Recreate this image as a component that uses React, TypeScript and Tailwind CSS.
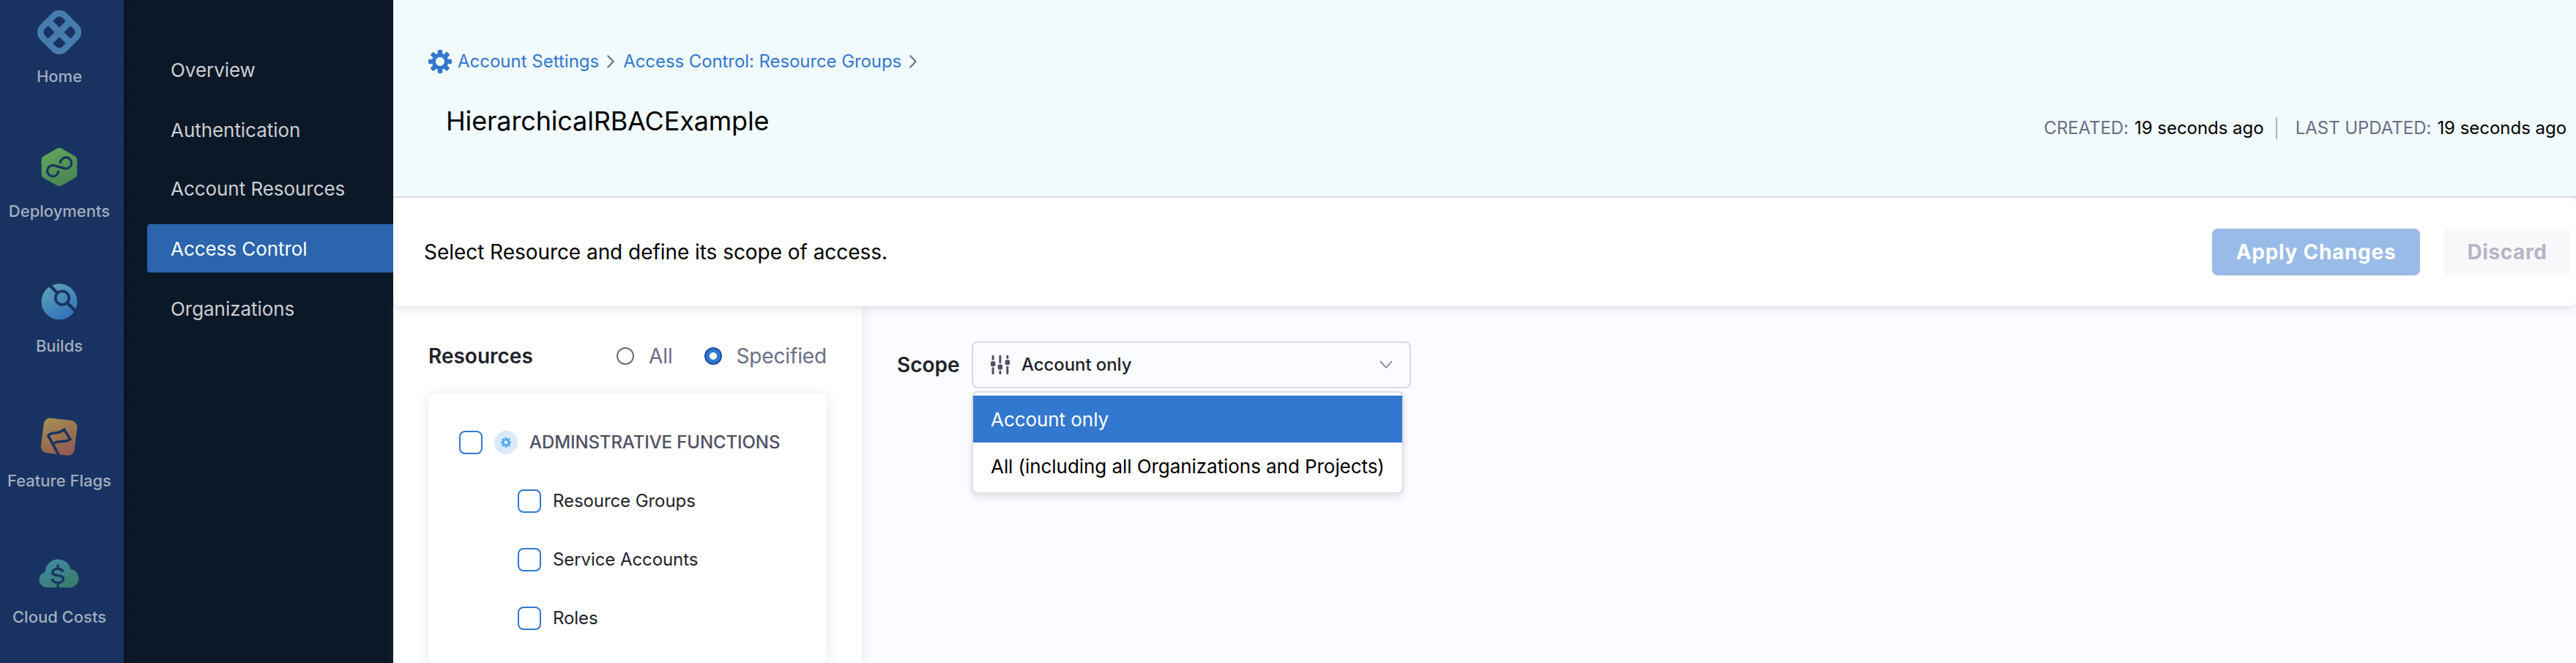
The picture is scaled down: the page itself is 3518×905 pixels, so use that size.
import type { ReactNode } from 'react'
import clsx from 'clsx'

const COG_PATH =
    'M15.19 6.39h-1.85c-.11-.37-.27-.71-.45-1.04l1.36-1.36c.31-.31.31-.82 0-1.13l-1.13-1.13c-.31-.31-.82-.31-1.13 0l-1.36 1.36c-.33-.17-.67-.33-1.04-.44V.79c0-.44-.36-.8-.8-.8h-1.6c-.44 0-.8.36-.8.8v1.86c-.39.12-.75.28-1.1.47l-1.3-1.3c-.3-.3-.79-.3-1.09 0L1.82 2.91c-.3.3-.3.79 0 1.09l1.3 1.3c-.2.34-.36.7-.48 1.09H.79c-.44 0-.8.36-.8.8v1.6c0 .44.36.8.8.8h1.85c.11.37.27.71.45 1.04l-1.36 1.36c-.31.31-.31.82 0 1.13l1.13 1.13c.31.31.82.31 1.13 0l1.36-1.36c.33.18.67.33 1.04.44v1.86c0 .44.36.8.8.8h1.6c.44 0 .8-.36.8-.8v-1.86c.39-.12.75-.28 1.1-.47l1.3 1.3c.3.3.79.3 1.09 0l1.09-1.09c.3-.3.3-.79 0-1.09l-1.3-1.3c.19-.35.36-.71.48-1.1h1.85c.44 0 .8-.36.8-.8v-1.6a.816.816 0 0 0-.81-.79zm-7.2 4.6c-1.66 0-3-1.34-3-3s1.34-3 3-3 3 1.34 3 3-1.34 3-3 3z'

function CogIcon({ className }: { className?: string }) {
    return (
        <svg viewBox="0 0 16 16" className={className} fill="currentColor">
            <path d={COG_PATH} />
        </svg>
    )
}

function HomeIcon() {
    return (
        <svg viewBox="0 0 60 60" className="h-[60px] w-[60px]" fill="none" stroke="#477dae">
            <rect x="8.75" y="8.75" width="42.5" height="42.5" rx="10.2" strokeWidth="8.5" transform="rotate(45 30 30)" />
            <path d="M16.5 16.5l27 27M43.5 16.5l-27 27" strokeWidth="9" />
        </svg>
    )
}

function DeploymentsIcon() {
    return (
        <svg viewBox="0 0 60 60" className="h-[60px] w-[60px]" fill="none">
            <defs>
                <linearGradient id="cd" x1="15" y1="5" x2="42" y2="55" gradientUnits="userSpaceOnUse">
                    <stop stopColor="#5fa65a" />
                    <stop offset="1" stopColor="#498355" />
                </linearGradient>
            </defs>
            <path
                d="M30 9.2L48.8 20V40L30 50.8L11.2 40V20Z"
                fill="url(#cd)"
                stroke="url(#cd)"
                strokeWidth="11"
                strokeLinejoin="round"
            />
            <path
                d="M31.5 25.2A7.6 7.6 0 1 1 37.3 31.9L22.7 27.9A7.5 7.5 0 1 0 28.6 35"
                stroke="#183361"
                strokeWidth="3.2"
            />
        </svg>
    )
}

function BuildsIcon() {
    return (
        <svg viewBox="0 0 60 60" className="h-[60px] w-[60px]" fill="none">
            <defs>
                <linearGradient id="ci" x1="16" y1="9" x2="40" y2="52" gradientUnits="userSpaceOnUse">
                    <stop stopColor="#5b9fb4" />
                    <stop offset="1" stopColor="#3172bd" />
                </linearGradient>
            </defs>
            <circle cx="30" cy="29.8" r="24.5" fill="url(#ci)" />
            <circle cx="34" cy="24.7" r="9.2" stroke="#183361" strokeWidth="3.7" />
            <path d="M15 5.6L27.6 18.2M40.8 31.4L56 46.6" stroke="#183361" strokeWidth="4.2" />
        </svg>
    )
}

function FeatureFlagsIcon() {
    return (
        <svg viewBox="0 0 60 60" className="h-[60px] w-[60px]" fill="none">
            <defs>
                <linearGradient id="ff" x1="12" y1="6" x2="42" y2="52" gradientUnits="userSpaceOnUse">
                    <stop stopColor="#a48f50" />
                    <stop offset="1" stopColor="#925b54" />
                </linearGradient>
            </defs>
            <rect x="6.7" y="6.2" width="46" height="48" rx="9" fill="url(#ff)" transform="rotate(7 29.7 30.2)" />
            <path
                d="M30.3 57L14.8 28.6C19.5 22.2 27.5 28 36.8 20.4L44.8 33.6C37 39.4 31 33.6 22.8 39.2"
                stroke="#183361"
                strokeWidth="3.6"
            />
        </svg>
    )
}

function CloudCostsIcon() {
    return (
        <svg viewBox="0 0 60 60" className="h-[60px] w-[60px]" fill="none">
            <defs>
                <linearGradient id="ce" x1="20" y1="12" x2="40" y2="52" gradientUnits="userSpaceOnUse">
                    <stop stopColor="#4189a1" />
                    <stop offset="1" stopColor="#397c6b" />
                </linearGradient>
            </defs>
            <path
                d="M12.7 50A10.8 10.8 0 0 1 10.7 28.7A17.7 17.7 0 0 1 45.6 25A12.6 12.6 0 0 1 45.6 50Z"
                fill="url(#ce)"
            />
            <path
                d="M28 18.6V24M28 43V51M35.2 28.6C34.2 25.8 31.4 24.4 28 24.4C23.6 24.4 20.8 26.4 20.8 29.4C20.8 36 35.6 31 35.6 38.4C35.6 41.6 32.4 43.4 28 43.4C23.8 43.4 21 41.4 20.2 38"
                stroke="#183361"
                strokeWidth="3.2"
            />
        </svg>
    )
}

function SlidersIcon() {
    return (
        <svg viewBox="0 0 26 26" className="h-[26px] w-[26px]" fill="#4f5162">
            <rect x="1.6" y="0" width="3" height="6.8" rx="1.2" />
            <rect x="0" y="8.2" width="6.3" height="6.8" rx="1.4" />
            <rect x="1.6" y="16.2" width="3" height="9.8" rx="1.2" />
            <rect x="11.4" y="0" width="3" height="11" rx="1.2" />
            <rect x="9.8" y="12.6" width="6.3" height="6.8" rx="1.4" />
            <rect x="11.4" y="20.8" width="3" height="5.2" rx="1.2" />
            <rect x="21.3" y="0" width="3" height="4.8" rx="1.2" />
            <rect x="19.7" y="6.2" width="6.3" height="6.8" rx="1.4" />
            <rect x="21.3" y="14.4" width="3" height="11.6" rx="1.2" />
        </svg>
    )
}

function Separator() {
    return (
        <svg viewBox="0 0 10 18" className="h-[18px] w-[10px]" fill="none" stroke="#6b6d85" strokeWidth="2">
            <path d="M1.2 1.2L8.6 9L1.2 16.8" strokeLinecap="round" strokeLinejoin="round" />
        </svg>
    )
}

const modules: { label: string; icon: ReactNode }[] = [
    { label: 'Home', icon: <HomeIcon /> },
    { label: 'Deployments', icon: <DeploymentsIcon /> },
    { label: 'Builds', icon: <BuildsIcon /> },
    { label: 'Feature Flags', icon: <FeatureFlagsIcon /> },
    { label: 'Cloud Costs', icon: <CloudCostsIcon /> },
]

const links = ['Overview', 'Authentication', 'Account Resources', 'Access Control', 'Organizations']

function ModuleNav() {
    return (
        <nav className="flex w-[169px] shrink-0 flex-col bg-[#183361] pt-[14px] pr-[7px]">
            {modules.map(({ label, icon }) => (
                <div key={label} className="flex h-[184px] shrink-0 flex-col items-center last:mt-0.5">
                    {icon}
                    <span className="mt-4 text-[22px] leading-7 font-medium whitespace-nowrap text-[#a3adbf]">{label}</span>
                </div>
            ))}
        </nav>
    )
}

function SideNav() {
    return (
        <nav className="flex w-[368px] shrink-0 flex-col bg-[#0b1828] bg-linear-to-r from-[#071220] to-[#0b1828] to-[10px] pt-[62px] pl-8">
            {links.map((link) => (
                <a
                    key={link}
                    className={clsx(
                        'mb-4 flex h-[66px] items-center rounded-l pl-8 text-[26px] tracking-[-0.05px] nth-2:mb-3.5',
                        link === 'Access Control' ? 'bg-[#2a65ad] text-white' : 'text-[#cdced1]',
                    )}
                >
                    {link}
                </a>
            ))}
        </nav>
    )
}

function Header() {
    return (
        <header className="flex h-[270px] shrink-0 justify-between border-b-2 border-[#d9dae5] bg-[#f1fafd]">
            <div className="flex flex-col pt-[68px] pl-12">
                <div className="flex h-8 items-center text-[24px] text-[#3278cf]">
                    <CogIcon className="mr-2 h-8 w-8" />
                    <a className="mr-[11px]">Account Settings</a>
                    <Separator />
                    <a className="mr-[11px] ml-3 tracking-[-0.08px]">Access Control: Resource Groups</a>
                    <Separator />
                </div>
                <h1 className="mt-[42px] ml-6 text-[36px] leading-[46px] tracking-[-0.16px] text-black">
                    HierarchicalRBACExample
                </h1>
            </div>
            <div className="mt-[160px] mr-[13px] flex h-[30px] items-center text-[24px] tracking-[-0.03px] whitespace-nowrap text-black">
                <span className="mr-2 text-[#6b6d85]">CREATED:</span>
                19 seconds ago
                <span className="mr-[25px] ml-4 h-[30px] w-[2px] bg-[#b0b1c4]" />
                <span className="mr-2 text-[#6b6d85]">LAST UPDATED:</span>
                19 seconds ago
            </div>
        </header>
    )
}

function Toolbar() {
    return (
        <div className="z-10 flex h-[148px] shrink-0 items-center rounded-lg bg-white pr-[7px] pl-[42px] shadow-[0_2px_14px_rgba(40,41,61,0.16)] [clip-path:inset(0_0_-24px_0)]">
            <p className="text-[28px] tracking-[-0.05px] text-black">Select Resource and define its scope of access.</p>
            <button className="ml-auto h-16 w-[284px] rounded-lg bg-[#99bbe7] text-[28px] font-bold tracking-[0.7px] text-white">
                Apply Changes
            </button>
            <button className="ml-8 h-16 w-[174px] rounded-lg bg-[#f8f8fb] text-[28px] font-bold tracking-[0.6px] text-[#b5b5c3]">
                Discard
            </button>
        </div>
    )
}

function Radio({ checked, label }: { checked?: boolean; label: string }) {
    return (
        <label className="flex items-center gap-5 text-[28px] tracking-[-0.15px] text-[#6b6d85]">
            <span
                className={clsx(
                    'flex h-6 w-6 items-center justify-center rounded-full border-2',
                    checked ? 'border-[#1b4fa3] bg-[#3278cf]' : 'border-[#6b6d85] bg-white',
                )}
            >
                {checked && <span className="h-2.5 w-2.5 rounded-full bg-white" />}
            </span>
            {label}
        </label>
    )
}

function Checkbox() {
    return <span className="h-8 w-8 shrink-0 rounded-lg border-2 border-[#3278cf] bg-white" />
}

function ResourcesPanel() {
    return (
        <section className="z-[1] flex w-[640px] shrink-0 flex-col bg-white px-12 pt-[48px] shadow-[0_0_14px_rgba(96,97,112,0.16)]">
            <div className="flex h-10 items-center">
                <h2 className="mr-auto text-[28px] font-semibold text-[#22222a]">Resources</h2>
                <Radio label="All" />
                <div className="w-[43px]" />
                <Radio label="Specified" checked />
            </div>
            <div className="mt-8 h-[420px] rounded-lg bg-white pt-[50px] pl-[42px] shadow-[0_2px_20px_rgba(96,97,112,0.16)]">
                <div className="flex h-8 items-center gap-4">
                    <Checkbox />
                    <span className="flex h-8 w-8 items-center justify-center rounded-full bg-[#d9e9f9]">
                        <CogIcon className="h-3.5 w-3.5 text-[#4ca4f0]" />
                    </span>
                    <span className="text-[24px] font-medium tracking-[-0.1px] text-[#4f5162]">ADMINSTRATIVE FUNCTIONS</span>
                </div>
                {['Resource Groups', 'Service Accounts', 'Roles'].map((name) => (
                    <div
                        key={name}
                        className="mt-12 ml-20 flex h-8 items-center gap-4 text-[24px] tracking-[-0.08px] text-[#22222a]"
                    >
                        <Checkbox />
                        {name}
                    </div>
                ))}
            </div>
        </section>
    )
}

function ScopePanel() {
    return (
        <section className="flex flex-1 items-start pt-12 pl-12">
            <span className="flex h-16 w-[102px] items-center text-[28px] font-semibold text-[#22222a]">Scope</span>
            <div className="relative">
                <div className="flex h-16 w-[600px] items-center rounded-lg border-2 border-[#d9dae5] pr-[23px] pl-6 text-[24px] font-medium tracking-[-0.08px] text-[#22222a]">
                    <SlidersIcon />
                    <span className="mr-auto ml-4">Account only</span>
                    <svg viewBox="0 0 18 12" className="h-3 w-[18px]" fill="none" stroke="#9293ab" strokeWidth="2">
                        <path d="M1.5 1.5L9 9.8L16.5 1.5" strokeLinecap="round" strokeLinejoin="round" />
                    </svg>
                </div>
                <ul className="absolute top-[68px] left-0 w-[590px] rounded-lg border-2 border-[#dfe0e4] bg-white pt-1 pb-1 text-[26px] tracking-[-0.06px] whitespace-nowrap shadow-[0_4px_10px_rgba(40,41,61,0.14)]">
                    <li className="flex h-16 items-center bg-[#3278cf] pl-6 text-white">Account only</li>
                    <li className="flex h-16 items-center pl-6 text-black">All (including all Organizations and Projects)</li>
                </ul>
            </div>
        </section>
    )
}

export default function App() {
    return (
        <div className="flex h-[905px] w-full overflow-hidden bg-[#fbfcff] font-['Inter',sans-serif]">
            <ModuleNav />
            <SideNav />
            <main className="flex min-w-0 flex-1 flex-col">
                <Header />
                <Toolbar />
                <div className="flex min-h-0 flex-1">
                    <ResourcesPanel />
                    <ScopePanel />
                </div>
            </main>
        </div>
    )
}
